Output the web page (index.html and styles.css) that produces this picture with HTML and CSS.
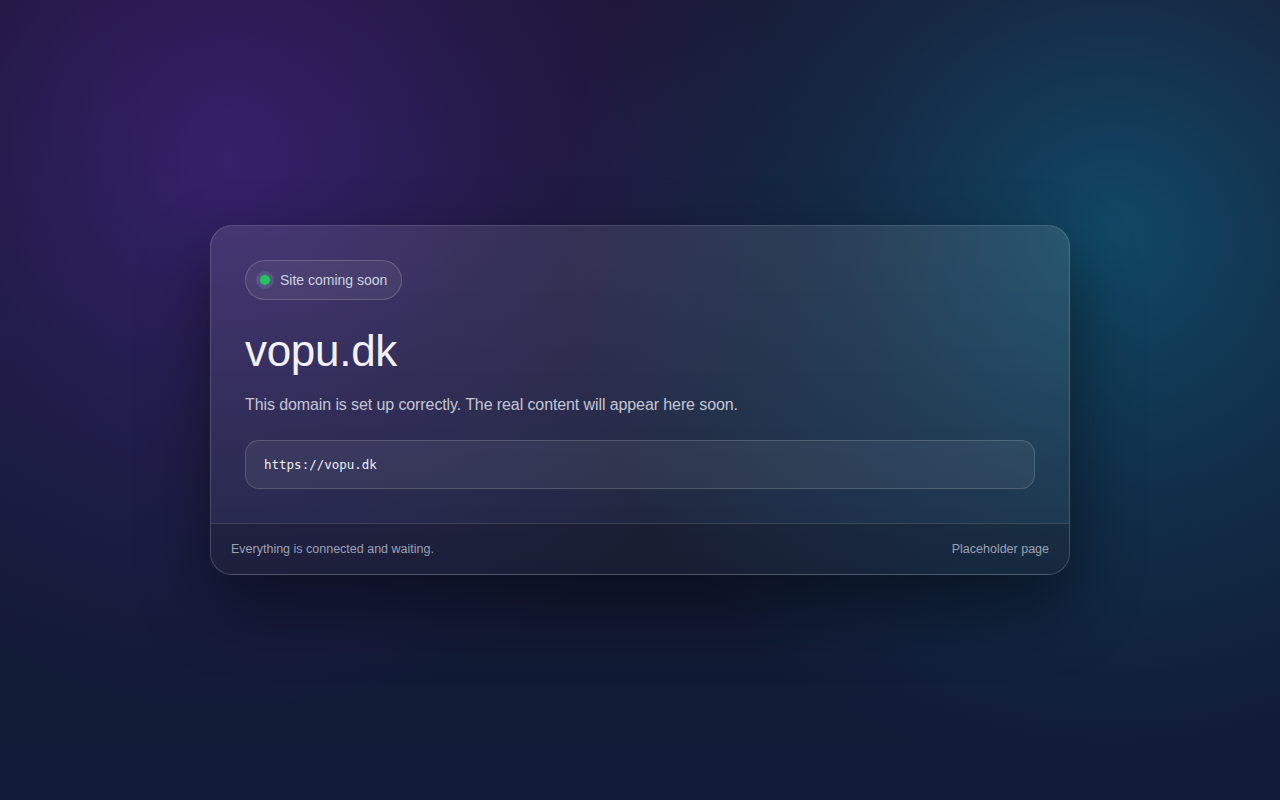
FILE: index.html
```html
<!DOCTYPE html>
<html lang="en">
<head>
    <meta charset="UTF-8">
    <meta name="viewport" content="width=device-width, initial-scale=1.0">
    <title>vopu.dk</title>
    <link rel="stylesheet" href="styles.css">
</head>
<body>
    <main class="card">
        <div class="card-body">
            <div class="status-pill">
                <span class="status-dot"></span>
                Site coming soon
            </div>

            <h1 class="domain-title">vopu.dk</h1>

            <p class="domain-message">
                This domain is set up correctly. The real content will appear here soon.
            </p>

            <div class="url-box">
                <code>https://vopu.dk</code>
            </div>
        </div>

        <footer class="card-footer">
            <span>Everything is connected and waiting.</span>
            <span>Placeholder page</span>
        </footer>
    </main>
</body>
</html>
```

FILE: styles.css
```css
* {
    margin: 0;
    padding: 0;
    box-sizing: border-box;
}

html,
body {
    height: 100%;
}

body {
    font-family: 'Liberation Sans', Arial, sans-serif;
    background:
        radial-gradient(circle at 18% 20%, rgba(105, 50, 200, 0.38) 0%, rgba(105, 50, 200, 0.16) 22%, rgba(105, 50, 200, 0) 45%),
        radial-gradient(circle at 87% 29%, rgba(8, 145, 178, 0.40) 0%, rgba(8, 145, 178, 0.16) 22%, rgba(8, 145, 178, 0) 44%),
        linear-gradient(180deg, #19142f 0%, #131a34 55%, #111a36 100%);
    min-height: 100vh;
    display: flex;
    align-items: center;
    justify-content: center;
    color: #e2e8f0;
}

.card {
    width: 860px;
    border-radius: 22px;
    border: 1px solid rgba(255, 255, 255, 0.16);
    background: linear-gradient(180deg, rgba(255, 255, 255, 0.10) 0%, rgba(255, 255, 255, 0.05) 100%);
    box-shadow: 0 30px 70px rgba(0, 0, 0, 0.45);
    overflow: hidden;
}

.card-body {
    padding: 34px;
}

.status-pill {
    display: inline-flex;
    align-items: center;
    gap: 10px;
    height: 40px;
    padding: 0 14px;
    border-radius: 999px;
    border: 1px solid rgba(255, 255, 255, 0.18);
    background: rgba(255, 255, 255, 0.06);
    font-size: 14px;
    color: #cdd3e2;
}

.status-dot {
    width: 10px;
    height: 10px;
    border-radius: 50%;
    background: #22c55e;
    box-shadow: 0 0 0 4px rgba(110, 150, 160, 0.28);
}

.domain-title {
    margin-top: 23px;
    font-size: 44px;
    font-weight: 400;
    line-height: 56px;
    letter-spacing: -0.3px;
    color: #f1f2f8;
}

.domain-message {
    margin-top: 14px;
    font-size: 16px;
    line-height: 24px;
    letter-spacing: -0.1px;
    color: #c3c6d6;
}

.url-box {
    margin-top: 23px;
    height: 49px;
    display: flex;
    align-items: center;
    padding: 0 18px;
    border-radius: 14px;
    border: 1px solid rgba(255, 255, 255, 0.16);
    background: rgba(255, 255, 255, 0.06);
}

.url-box code {
    font-family: 'DejaVu Sans Mono', 'Liberation Mono', monospace;
    font-size: 12.5px;
    color: #eef0f6;
}

.card-footer {
    display: flex;
    justify-content: space-between;
    align-items: center;
    height: 51px;
    padding: 0 20px;
    border-top: 1px solid rgba(255, 255, 255, 0.14);
    background: rgba(0, 0, 0, 0.18);
    font-size: 12.5px;
    color: #9aa1b6;
}
```
